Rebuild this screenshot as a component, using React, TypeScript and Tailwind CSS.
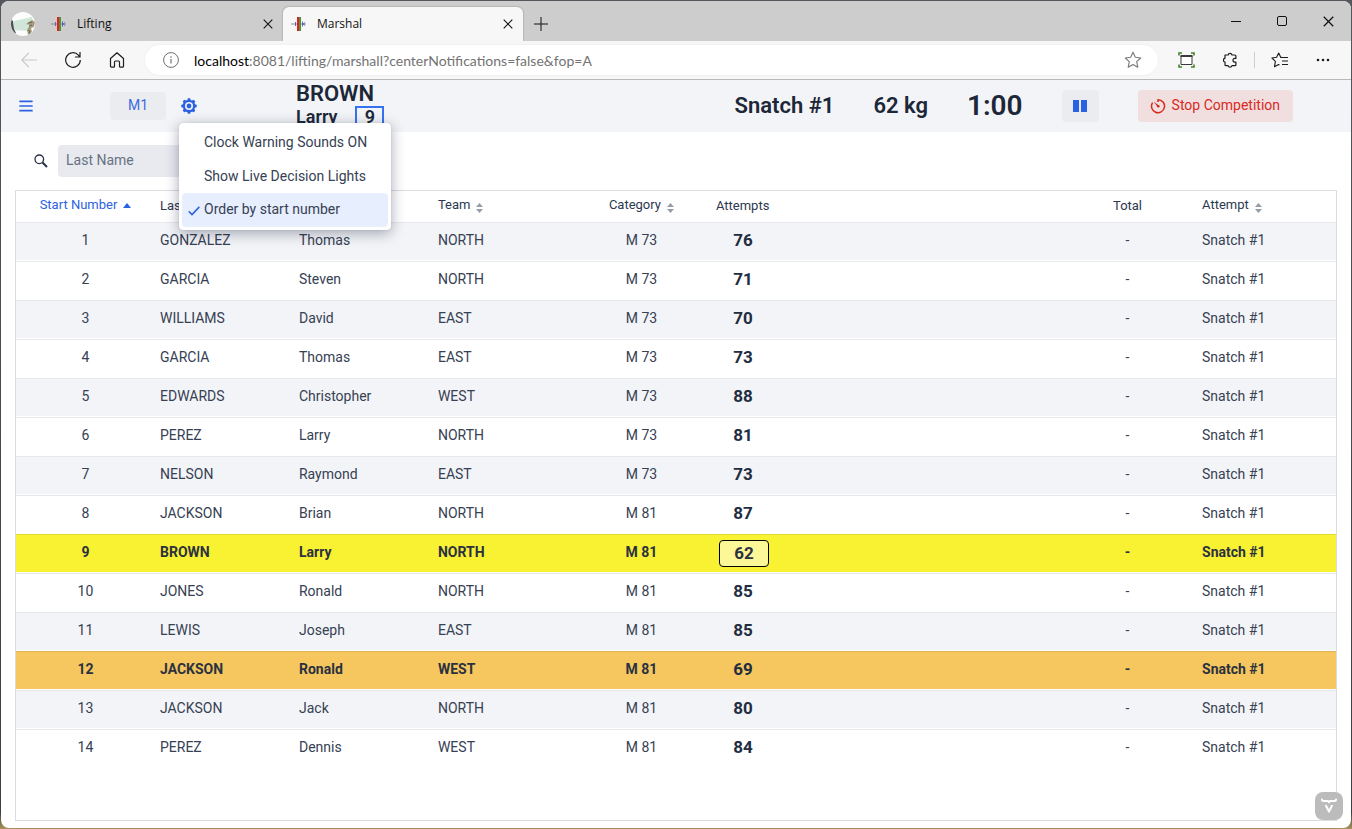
import type { ReactNode } from "react";

type Athlete = {
  start: number;
  last: string;
  first: string;
  team: string;
  category: string;
  attempt: number;
  status?: "current" | "next";
};

const athletes: Athlete[] = [
  { start: 1, last: "GONZALEZ", first: "Thomas", team: "NORTH", category: "M 73", attempt: 76 },
  { start: 2, last: "GARCIA", first: "Steven", team: "NORTH", category: "M 73", attempt: 71 },
  { start: 3, last: "WILLIAMS", first: "David", team: "EAST", category: "M 73", attempt: 70 },
  { start: 4, last: "GARCIA", first: "Thomas", team: "EAST", category: "M 73", attempt: 73 },
  { start: 5, last: "EDWARDS", first: "Christopher", team: "WEST", category: "M 73", attempt: 88 },
  { start: 6, last: "PEREZ", first: "Larry", team: "NORTH", category: "M 73", attempt: 81 },
  { start: 7, last: "NELSON", first: "Raymond", team: "EAST", category: "M 73", attempt: 73 },
  { start: 8, last: "JACKSON", first: "Brian", team: "NORTH", category: "M 81", attempt: 87 },
  { start: 9, last: "BROWN", first: "Larry", team: "NORTH", category: "M 81", attempt: 62, status: "current" },
  { start: 10, last: "JONES", first: "Ronald", team: "NORTH", category: "M 81", attempt: 85 },
  { start: 11, last: "LEWIS", first: "Joseph", team: "EAST", category: "M 81", attempt: 85 },
  { start: 12, last: "JACKSON", first: "Ronald", team: "WEST", category: "M 81", attempt: 69, status: "next" },
  { start: 13, last: "JACKSON", first: "Jack", team: "NORTH", category: "M 81", attempt: 80 },
  { start: 14, last: "PEREZ", first: "Dennis", team: "WEST", category: "M 81", attempt: 84 },
];

function Avatar() {
  return (
    <svg viewBox="0 0 24 24" className="size-6 shrink-0" aria-hidden="true">
      <clipPath id="avatar-clip">
        <circle cx="12" cy="12" r="12" />
      </clipPath>
      <g clipPath="url(#avatar-clip)">
        <rect width="24" height="24" fill="#fdfdfd" />
        <path d="M3 9l18-4 2 8-6 6-14-1z" fill="#cfe6d8" />
        <path d="M0 7l2 2 1 8 2 4-5 2z" fill="#4d4f56" />
        <path d="M15 12l6-4 3 2-1 5-3 1 1 4-4 3-1-5 3-5z" fill="#a59a7c" />
        <path d="M17 11l4-1M18 14l3-1M18 18l1 4" stroke="#5d5747" strokeWidth=".8" />
      </g>
    </svg>
  );
}

function BarbellIcon() {
  return (
    <svg viewBox="0 0 16 16" className="size-4 shrink-0" aria-hidden="true">
      <path d="M0 8h15" stroke="#8d8d94" />
      <path d="M4.500 6v4M11.500 5.500v5M14 6.500L12 8l2 1.500" stroke="#6a60b8" strokeWidth="1" fill="none" />
      <rect x="6" y="1" width="2" height="14" fill="#f01818" />
      <rect x="8" y="1" width="2" height="14" fill="#3f9a3a" />
    </svg>
  );
}

function CloseIcon({ className }: { className: string }) {
  return (
    <svg viewBox="0 0 10 10" className={className} fill="none" stroke="#111" strokeWidth="1.100" aria-hidden="true">
      <path d="M.7.7l8.600 8.600M9.300.7L.7 9.300" />
    </svg>
  );
}

function ToolButton({ label, children }: { label: string; children: ReactNode }) {
  return (
    <button type="button" aria-label={label} className="flex w-11 shrink-0 items-center justify-center text-[#1c1c1c]">
      {children}
    </button>
  );
}

function Tab({ title, active }: { title: string; active?: boolean }) {
  return (
    <div
      className={
        active
          ? "flex w-60 items-center rounded-t-md bg-[#f7f7f7] pr-2.5 pl-2 shadow-[0_0_2px_rgba(0,0,0,0.35)]"
          : "flex w-60 items-center pr-2.5 pl-2"
      }
    >
      <BarbellIcon />
      <span className="ml-2.5 flex-1 text-xs text-[#111]">{title}</span>
      <button type="button" aria-label={"Close " + title}>
        <CloseIcon className="size-2.5" />
      </button>
    </div>
  );
}

function BrowserChrome() {
  return (
    <div className="shrink-0 font-['Open_Sans','Noto_Sans',sans-serif]">
      <div className="flex h-10 bg-[#cdcdcd]">
        <div className="flex w-[42px] items-center pt-1.5 pl-2.5">
          <Avatar />
        </div>
        <div className="flex pt-1.5">
          <Tab title="Lifting" />
          <Tab title="Marshal" active />
        </div>
        <button type="button" aria-label="New tab" className="flex w-9 items-center justify-center pt-1.5">
          <svg viewBox="0 0 14 14" className="size-3.5" stroke="#111" aria-hidden="true">
            <path d="M7 0v14M0 7h14" />
          </svg>
        </button>
        <div className="flex-1" />
        <div className="flex">
          <button type="button" aria-label="Minimize" className="flex w-[46px] items-center justify-center">
            <span className="h-px w-2.5 bg-[#111]" />
          </button>
          <button type="button" aria-label="Maximize" className="flex w-[46px] items-center justify-center">
            <span className="size-2.5 rounded-[2px] border border-[#111]" />
          </button>
          <button type="button" aria-label="Close window" className="flex w-[46px] items-center justify-center">
            <CloseIcon className="size-[11px]" />
          </button>
        </div>
      </div>
      <div className="relative flex h-[39px] border-b border-[#b9b9b9] bg-[#f7f7f7] pl-1.5">
        <ToolButton label="Back">
          <svg viewBox="0 0 16 16" className="size-4" fill="none" stroke="#c9c9c9" strokeWidth="1.100" aria-hidden="true">
            <path d="M16 8H.8M7.800 1L.8 8l7 7" />
          </svg>
        </ToolButton>
        <ToolButton label="Refresh">
          <svg viewBox="0 0 16 16" className="size-4" fill="none" stroke="currentColor" strokeWidth="1.200" aria-hidden="true">
            <path d="M15.300 8A7.300 7.300 0 1 1 13.400 3.100L14.800 4.800M15 0v5h-5" />
          </svg>
        </ToolButton>
        <ToolButton label="Home">
          <svg viewBox="0 0 16 16" className="size-4" fill="none" stroke="currentColor" strokeWidth="1.200" strokeLinejoin="round" aria-hidden="true">
            <path d="M1.500 6.500L8 .8l6.500 5.700v7.700q0 1-1 1h-2q-1 0-1-1V10q0-1-1-1h-3q-1 0-1 1v4.200q0 1-1 1h-2q-1 0-1-1z" />
          </svg>
        </ToolButton>
        <div className="my-1 mr-1.5 ml-1.5 flex flex-1 items-center rounded-full bg-white pr-4 pl-[18px] shadow-[0_0_3px_rgba(0,0,0,0.06)]">
          <svg viewBox="0 0 16 16" className="size-4 shrink-0" fill="none" stroke="#6f6f6f" aria-hidden="true">
            <circle cx="8" cy="8" r="7.400" />
            <path d="M8 7v4.500M8 4.300v1.400" strokeWidth="1.200" />
          </svg>
          <span className="ml-[15px] flex-1 font-[Lato,sans-serif] text-[14px] text-[#737373]">
            <span className="text-black">localhost</span>:8081/lifting/marshall?centerNotifications=false&amp;fop=A
          </span>
          <button type="button" aria-label="Add to favorites">
            <svg viewBox="0 0 18 18" className="size-[18px]" fill="none" stroke="#777" strokeWidth="1.100" strokeLinejoin="round" aria-hidden="true">
              <path d="M9 1.300l2.300 5 5.400.7-4 3.700 1.100 5.500L9 13.500l-4.800 2.700 1.100-5.500-4-3.700 5.400-.7z" />
            </svg>
          </button>
        </div>
        <ToolButton label="Screenshot">
          <svg viewBox="0 0 17 16" className="h-4 w-[17px]" fill="none" aria-hidden="true">
            <path d="M1 3.500V1h3M13 1h3v2.500M16 12.500V15h-3M4 15H1v-2.500" stroke="#43822c" strokeWidth="1.600" />
            <path d="M3 4h11v8.500H3z" fill="#fff" stroke="#3b3b3b" strokeWidth="1" />
            <path d="M2.500 4h12" stroke="#3b3b3b" strokeWidth="2" />
          </svg>
        </ToolButton>
        <ToolButton label="Extensions">
          <svg viewBox="0 0 16 16" className="size-4" fill="none" stroke="currentColor" strokeWidth="1.200" strokeLinejoin="round" aria-hidden="true">
            <path d="M3 3h3.100a2 2 0 0 1 3.900 0h2.900q1 0 1 1v2.400h-1a1.900 1.900 0 0 0 0 3.800h1v2.500q0 1-1 1H10a2 2 0 0 1-3.900 0H4q-1 0-1-1v-2.600a2 2 0 0 1 0-3.900z" />
          </svg>
        </ToolButton>
        <span className="mx-0.5 my-auto h-4 w-px bg-[#cfcfcf]" />
        <ToolButton label="Favorites">
          <svg viewBox="0 0 17 16" className="h-4 w-[17px]" fill="none" stroke="currentColor" strokeWidth="1.100" strokeLinejoin="round" aria-hidden="true">
            <path d="M10.500 5.500L9.600 5 7.700 1 5.600 5.300.9 6l3.500 3.300-.9 5.400 4-2.200 1 .6" />
            <path d="M9.500 5.500H17M11 9h6M11 12.500h6" />
          </svg>
        </ToolButton>
        <ToolButton label="Settings and more">
          <svg viewBox="0 0 14 4" className="h-1 w-3.5" fill="currentColor" aria-hidden="true">
            <circle cx="2" cy="2" r="1.300" />
            <circle cx="7" cy="2" r="1.300" />
            <circle cx="12" cy="2" r="1.300" />
          </svg>
        </ToolButton>
        <span className="w-1.5" />
      </div>
    </div>
  );
}

function GearIcon() {
  return (
    <svg viewBox="0 0 16 16" className="size-4" aria-hidden="true">
      <g fill="#2b62e3">
        <rect x="6.500" y="0.300" width="3" height="15.400" rx=".8" />
        <rect x="6.500" y="0.300" width="3" height="15.400" rx=".8" transform="rotate(45 8 8)" />
        <rect x="6.500" y="0.300" width="3" height="15.400" rx=".8" transform="rotate(90 8 8)" />
        <rect x="6.500" y="0.300" width="3" height="15.400" rx=".8" transform="rotate(135 8 8)" />
        <circle cx="8" cy="8" r="6.300" />
      </g>
      <circle cx="8" cy="8" r="4" fill="#f3f4f7" />
      <circle cx="8" cy="8" r="2.400" fill="#2b62e3" />
    </svg>
  );
}

function SettingsMenu() {
  return (
    <ul
      role="menu"
      className="absolute top-[25px] -left-0.5 z-10 w-[212px] rounded bg-white px-[3px] pt-0.5 pb-[3px] text-sm text-[#364153] shadow-[0_3px_14px_rgba(20,30,60,0.38),0_0_1px_rgba(20,30,60,0.3)]"
    >
      <li role="none">
        <button type="button" role="menuitem" className="flex h-[34px] w-full items-center pl-[22px]">
          Clock Warning Sounds ON
        </button>
      </li>
      <li role="none">
        <button type="button" role="menuitem" className="flex h-[34px] w-full items-center pl-[22px]">
          Show Live Decision Lights
        </button>
      </li>
      <li role="none">
        <button
          type="button"
          role="menuitemcheckbox"
          aria-checked="true"
          className="flex h-[34px] w-full items-center rounded bg-[#e7eefe] pb-0.5 pl-1.5"
        >
          <svg viewBox="0 0 12 10" className="mt-1 mr-1 h-2.5 w-3" fill="none" stroke="#2b62e3" strokeWidth="1.600" aria-hidden="true">
            <path d="M.8 5.200l3.200 3.300L11.300.9" />
          </svg>
          Order by start number
        </button>
      </li>
    </ul>
  );
}

function CompetitionHeader() {
  return (
    <header className="flex h-[52px] shrink-0 items-center bg-[#f3f4f7] text-[#1c2738]">
      <button type="button" aria-label="Toggle menu" className="ml-[18px]">
        <svg viewBox="0 0 14 12" className="h-3 w-3.5" stroke="#2b62e3" strokeWidth="1.700" strokeLinecap="round" aria-hidden="true">
          <path d="M1 1.300h12M1 6h12M1 10.700h12" />
        </svg>
      </button>
      <button type="button" className="ml-[77px] h-7 w-14 rounded bg-[#eaecf0] pb-0.5 text-sm text-[#3c6be0]">
        M1
      </button>
      <div className="relative ml-[15px] flex">
        <button type="button" aria-label="Settings">
          <GearIcon />
        </button>
        <SettingsMenu />
      </div>
      <div className="ml-[99px] flex h-[52px] flex-col overflow-hidden font-semibold">
        <h2 className="h-[26px] text-[22px] leading-[28px]">BROWN</h2>
        <div className="flex items-start">
          <h3 className="text-lg leading-[22px]">Larry</h3>
          <span className="ml-[18px] w-[29px] border-2 border-[#3572f2] text-center text-lg leading-[18px]">9</span>
        </div>
      </div>
      <div className="flex-1" />
      <div className="flex items-center gap-[39px] pr-[58px] font-semibold">
        <span className="pb-0.5 text-[22px]">Snatch #1</span>
        <span className="pb-0.5 text-[22px]">62 kg</span>
        <span className="text-[28px]">1:00</span>
        <button type="button" aria-label="Pause clock" className="flex h-8 w-[37px] items-center justify-center rounded bg-[#eaecf0]">
          <svg viewBox="0 0 14 12" className="h-3 w-3.5" fill="#2b62e3" aria-hidden="true">
            <path d="M0 0h6v12H0zM8 0h6v12H8z" />
          </svg>
        </button>
        <button
          type="button"
          className="flex h-8 items-center gap-1.5 rounded bg-[#f1dfe0] pr-[13px] pl-3 text-sm font-normal text-[#d8291c]"
        >
          <svg viewBox="0 0 16 16" className="size-4" fill="none" stroke="currentColor" strokeWidth="1.500" aria-hidden="true">
            <path d="M8 1.200V4M8 1.700A6.500 6.500 0 1 1 2.600 4.600" />
            <path d="M3.500 3.500l5.700 4.300-1.400 1.400z" fill="currentColor" stroke="none" />
            <circle cx="8.300" cy="8.300" r="1.300" fill="currentColor" stroke="none" />
          </svg>
          <span className="pb-0.5">Stop Competition</span>
        </button>
      </div>
    </header>
  );
}

function SortIcon() {
  return (
    <svg viewBox="0 0 7 10" className="mt-1 h-2.5 w-[7px]" fill="#959dab" aria-hidden="true">
      <path d="M3.500 0L7 4H0zM3.500 10L7 6H0z" />
    </svg>
  );
}

function HeaderCell({ children, className, label }: { children?: ReactNode; className: string; label?: string }) {
  return (
    <th scope="col" aria-label={label} className="h-[31px] p-0 text-left font-normal">
      <div className={className}>{children}</div>
    </th>
  );
}

function Row({ athlete, shaded }: { athlete: Athlete; shaded: boolean }) {
  const current = athlete.status === "current";
  const tone = current
    ? "[&>td]:border-t-[#e0da2e] [&>td]:bg-[#f9f232] font-bold text-[#2b3140]"
    : athlete.status === "next"
      ? "[&>td]:border-t-[#e0b456] [&>td]:bg-[#f5c75e] font-bold text-[#2b3140]"
      : shaded
        ? "[&>td]:border-t-[#e6e8ec] [&>td]:bg-[#f3f4f7] text-[#364153]"
        : "[&>td]:border-t-[#e6e8ec] [&>td]:bg-white text-[#364153]";
  return (
    <tr className={"[&>td]:h-[39px] [&>td]:border-t [&>td]:border-b [&>td]:border-b-white [&>td]:py-0 [&>td]:pr-0 [&>td]:pl-[5px] [&>td]:leading-5 " + tone}>
      <td>
        <div className="-ml-[5px] pb-1 text-center">{athlete.start}</div>
      </td>
      <td><div className="pb-1">{athlete.last}</div></td>
      <td><div className="pb-1">{athlete.first}</div></td>
      <td><div className="pb-1">{athlete.team}</div></td>
      <td><div className="-ml-[5px] pb-1 text-center">{athlete.category}</div></td>
      <td>
        <div
          className={
            current
              ? "ml-[3px] h-[27px] w-[50px] rounded border border-black bg-[#fdf897] text-center text-[17px] leading-[25px] font-bold"
              : "ml-[3px] w-12 pb-1 text-center text-[17px] font-bold text-[#222d3f]"
          }
        >
          {athlete.attempt}
        </div>
      </td>
      <td><div className="-ml-[5px] pb-1 text-center">-</div></td>
      <td><div className="pb-1">Snatch #1</div></td>
    </tr>
  );
}

function AthleteGrid() {
  return (
    <div className="mx-3.5 mb-[7px] flex-1 overflow-hidden border border-[#d9dce1]">
      <table className="w-full table-fixed border-separate border-spacing-0 text-sm">
        <colgroup>
          <col className="w-[10.53%]" />
          <col className="w-[10.53%]" />
          <col className="w-[10.53%]" />
          <col className="w-[10.53%]" />
          <col className="w-[10.53%]" />
          <col />
          <col className="w-[10.53%]" />
          <col className="w-[10.53%]" />
        </colgroup>
        <thead className="text-[13px] text-[#2c3850]">
          <tr>
            <HeaderCell className="flex items-center justify-center gap-1.5 pb-0.5 text-[#2b62e3]">
              Start Number
              <svg viewBox="0 0 8 5" className="h-[5px] w-2" fill="#2b62e3" aria-hidden="true">
                <path d="M4 0l4 5H0z" />
              </svg>
            </HeaderCell>
            <HeaderCell className="pb-px pl-[5px]">Last Name</HeaderCell>
            <HeaderCell className="pl-[5px]" label="First Name" />
            <HeaderCell className="flex items-center gap-1.5 pb-0.5 pl-[5px]">Team <SortIcon /></HeaderCell>
            <HeaderCell className="flex items-center justify-center gap-1.5 pb-0.5">Category <SortIcon /></HeaderCell>
            <HeaderCell className="pb-px pl-[5px]">Attempts</HeaderCell>
            <HeaderCell className="pb-px text-center">Total</HeaderCell>
            <HeaderCell className="flex items-center gap-1.5 pb-0.5 pl-[5px]">Attempt <SortIcon /></HeaderCell>
          </tr>
        </thead>
        <tbody>
          {athletes.map((athlete, index) => (
            <Row key={athlete.start} athlete={athlete} shaded={index % 2 === 0} />
          ))}
        </tbody>
      </table>
    </div>
  );
}

function VaadinBadge() {
  return (
    <button
      type="button"
      aria-label="Development tools"
      className="absolute right-2 bottom-2 flex size-7 items-center justify-center rounded-lg bg-[#bcbcbc]"
    >
      <svg viewBox="0 0 16 16" className="size-4" fill="none" stroke="#fff" strokeLinecap="round" strokeLinejoin="round" aria-hidden="true">
        <path d="M1 1.500q0 1.500 1.500 1.500h3.800Q8 3 8 4.300 8 3 9.700 3h3.800Q15 3 15 1.500" strokeWidth="2" />
        <path d="M5 7.800L8 13.500l3-5.700" strokeWidth="2" />
      </svg>
    </button>
  );
}

export default function App() {
  return (
    <div className="flex h-screen flex-col bg-[linear-gradient(to_bottom,#54575c,#3d3e44_98%,#a8915a)] p-px font-[Roboto,sans-serif]">
      <main className="relative flex min-h-0 flex-1 flex-col overflow-hidden rounded-lg bg-white">
        <BrowserChrome />
        <CompetitionHeader />
        <div className="flex h-[58px] shrink-0 items-start pt-[13px] pl-[33px]">
          <label htmlFor="last-name" aria-label="Search by last name" className="flex h-8 items-center">
            <svg viewBox="0 0 14 14" className="h-3.5 w-3.5" fill="none" stroke="#263143" aria-hidden="true">
              <circle cx="5.300" cy="5.300" r="4.300" strokeWidth="1.300" />
              <path d="M8.500 8.500l4.500 4.500" strokeWidth="2" />
            </svg>
          </label>
          <input
            id="last-name"
            type="text"
            placeholder="Last Name"
            className="ml-2.5 h-8 w-48 rounded bg-[#e8eaef] px-2 pb-0.5 text-sm placeholder:text-[#677284]"
          />
        </div>
        <AthleteGrid />
        <VaadinBadge />
      </main>
    </div>
  );
}
